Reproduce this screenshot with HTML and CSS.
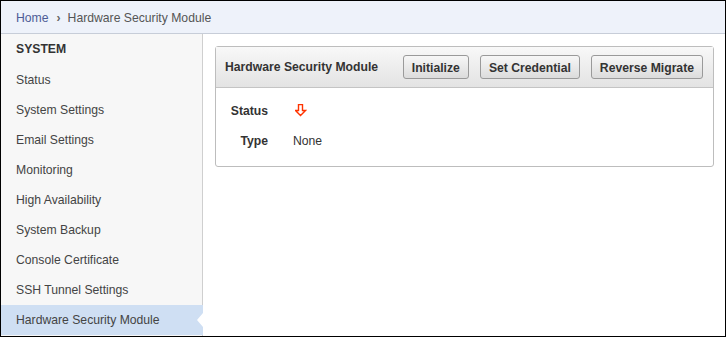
FILE: index.html
```html
<!DOCTYPE html>
<html lang="en">
<head>
  <meta charset="UTF-8">
  <title>Hardware Security Module</title>
  <link rel="stylesheet" href="styles.css">
</head>
<body>
  <div class="frame">
    <!-- breadcrumb -->
    <div class="crumbs">
      <a href="#">Home</a>
      <span class="sep">&#8250;</span>
      <span>Hardware Security Module</span>
    </div>

    <div class="main">
      <div class="sidebar">
        <div class="side-title">SYSTEM</div>
        <a class="side-item" href="#">Status</a>
        <a class="side-item" href="#">System Settings</a>
        <a class="side-item" href="#">Email Settings</a>
        <a class="side-item" href="#">Monitoring</a>
        <a class="side-item" href="#">High Availability</a>
        <a class="side-item" href="#">System Backup</a>
        <a class="side-item" href="#">Console Certificate</a>
        <a class="side-item" href="#">SSH Tunnel Settings</a>
        <a class="side-item active" href="#">Hardware Security Module</a>
      </div>

      <div class="content">
        <div class="panel">
          <div class="panel-head">
            <span class="panel-title">Hardware Security Module</span>
            <button>Initialize</button>
            <button>Set Credential</button>
            <button>Reverse Migrate</button>
          </div>
          <div class="panel-body">
            <div class="label">Status</div>
            <div class="value">
              <svg class="arrow" width="12" height="13" viewBox="0 0 12 13">
                <path d="M3.5 0.5 H7.5 V6.5 H10.5 L5.5 11.5 L0.5 6.5 H3.5 Z" fill="none" stroke="#ff3300" stroke-width="1.4"/>
              </svg>
            </div>
            <div class="label">Type</div>
            <div class="value">None</div>
          </div>
        </div>
      </div>
    </div>
  </div>
</body>
</html>
```

FILE: styles.css
```css
body {
  margin: 0;
  font-family: "Liberation Sans", Arial, sans-serif;
  font-size: 12.2px;
  color: #333;
}
.frame {
  width: 726px;
  height: 337px;
  border: 1px solid #000;
  box-sizing: border-box;
  display: flex;
  flex-direction: column;
  overflow: hidden;
}
.crumbs {
  height: 32px;
  background: #eef2fa;
  border-bottom: 1px solid #c7cdd8;
  display: flex;
  align-items: center;
  padding: 1px 0 0 15px;
  box-sizing: border-box;
  height: 33px;
  color: #555;
  flex-shrink: 0;
}
.crumbs a {
  color: #4d5c96;
  text-decoration: none;
}
.crumbs .sep {
  margin: 0 7px 0 8px;
  font-weight: bold;
  color: #666;
}
.main {
  flex: 1;
  display: flex;
  min-height: 0;
}
.sidebar {
  width: 201px;
  background: #f7f7f7;
  border-right: 1px solid #cfcfcf;
  display: flex;
  flex-direction: column;
  flex-shrink: 0;
}
.side-title {
  height: 31px;
  line-height: 30px;
  padding-left: 15px;
  font-weight: bold;
  color: #333;
}
.side-item {
  position: relative;
  height: 30px;
  line-height: 31px;
  padding-left: 15px;
  color: #444;
  text-decoration: none;
}
.side-item.active {
  background: #cfdff3;
  color: #444;
  margin-right: -1px;
}
/* notch pointing at the panel */
.side-item.active::after {
  content: "";
  position: absolute;
  right: 0;
  top: 8px;
  border-style: solid;
  border-width: 7px 6px 7px 0;
  border-color: transparent #fff transparent transparent;
}
.content {
  flex: 1;
  padding: 12px 11px 0 12px;
}
.panel {
  border: 1px solid #bdbdbd;
  border-radius: 3px;
  background: #fff;
}
.panel-head {
  height: 40px;
  border-bottom: 1px solid #c4c4c4;
  background: linear-gradient(#f8f8f8, #e3e3e3);
  display: flex;
  align-items: center;
  gap: 11px;
  padding: 0 10px 0 9px;
}
.panel-title {
  font-weight: bold;
  color: #333;
  margin-right: auto;
  white-space: nowrap;
}
button {
  height: 24px;
  padding: 1px 8px 0;
  border: 1px solid #9a9a9a;
  border-radius: 3px;
  background: linear-gradient(#f7f7f7, #dcdcdc);
  font-family: inherit;
  font-size: 12.2px;
  font-weight: bold;
  color: #333;
  white-space: nowrap;
  flex-shrink: 0;
}
.panel-body {
  display: grid;
  grid-template-columns: 42px 1fr;
  column-gap: 25px;
  row-gap: 12px;
  padding: 14px 10px 16px;
  align-items: center;
}
.label {
  text-align: right;
  font-weight: bold;
  color: #333;
  height: 18px;
  line-height: 18px;
}
.value {
  height: 18px;
  line-height: 18px;
  color: #333;
}
.arrow {
  display: block;
  margin-top: 2px;
  margin-left: 2px;
}
```
